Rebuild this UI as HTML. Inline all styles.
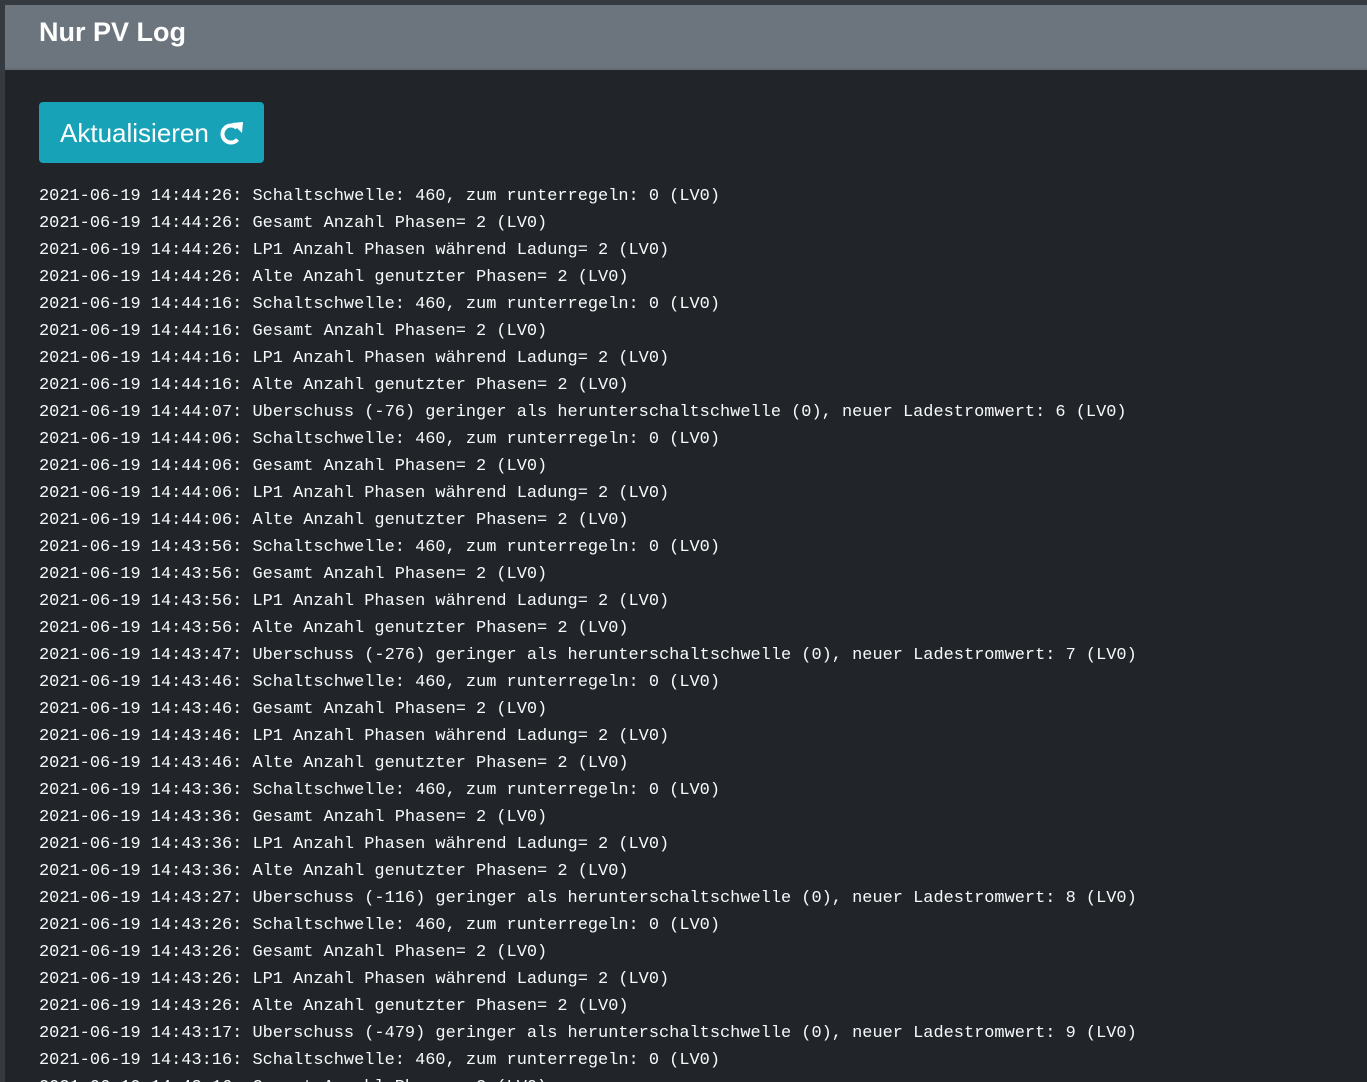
<!DOCTYPE html>
<html><head><meta charset="utf-8"><style>
html,body{margin:0;padding:0;width:1367px;height:1082px;overflow:hidden;}
body{background:#343a40;position:relative;font-family:"Liberation Sans",sans-serif;}
.main{position:absolute;left:5px;top:5px;width:1362px;height:1077px;overflow:hidden;background:#212529;}
.hdr{height:63px;background:#6c757d;border-bottom:2px solid #656c74;}
.hdr h1{margin:0;position:absolute;left:34px;top:12px;font-size:27px;font-weight:bold;color:#fff;}
.btn{position:absolute;left:34px;top:97px;width:225px;height:61px;background:#17a2b8;border-radius:4px;color:#fff;font-size:26px;line-height:63px;box-sizing:border-box;padding-left:21px;}
.btn svg{position:absolute;left:179px;top:19px;}
pre{position:absolute;left:34px;top:178px;margin:0;font-family:"Liberation Mono",monospace;font-size:16.95px;line-height:27px;color:#f8f9fa;}
</style></head><body>
<div class="main">
<div class="hdr"><h1>Nur PV Log</h1></div>
<div class="btn">Aktualisieren<svg width="26" height="26" viewBox="0 0 26 26"><path d="M19.5 18.5A8.5 8.5 0 1 1 19 7" fill="none" stroke="#fff" stroke-width="4"/><path d="M14 2L25 1L24 12Z" fill="#fff"/></svg></div>
<pre>2021-06-19 14:44:26: Schaltschwelle: 460, zum runterregeln: 0 (LV0)
2021-06-19 14:44:26: Gesamt Anzahl Phasen= 2 (LV0)
2021-06-19 14:44:26: LP1 Anzahl Phasen während Ladung= 2 (LV0)
2021-06-19 14:44:26: Alte Anzahl genutzter Phasen= 2 (LV0)
2021-06-19 14:44:16: Schaltschwelle: 460, zum runterregeln: 0 (LV0)
2021-06-19 14:44:16: Gesamt Anzahl Phasen= 2 (LV0)
2021-06-19 14:44:16: LP1 Anzahl Phasen während Ladung= 2 (LV0)
2021-06-19 14:44:16: Alte Anzahl genutzter Phasen= 2 (LV0)
2021-06-19 14:44:07: Uberschuss (-76) geringer als herunterschaltschwelle (0), neuer Ladestromwert: 6 (LV0)
2021-06-19 14:44:06: Schaltschwelle: 460, zum runterregeln: 0 (LV0)
2021-06-19 14:44:06: Gesamt Anzahl Phasen= 2 (LV0)
2021-06-19 14:44:06: LP1 Anzahl Phasen während Ladung= 2 (LV0)
2021-06-19 14:44:06: Alte Anzahl genutzter Phasen= 2 (LV0)
2021-06-19 14:43:56: Schaltschwelle: 460, zum runterregeln: 0 (LV0)
2021-06-19 14:43:56: Gesamt Anzahl Phasen= 2 (LV0)
2021-06-19 14:43:56: LP1 Anzahl Phasen während Ladung= 2 (LV0)
2021-06-19 14:43:56: Alte Anzahl genutzter Phasen= 2 (LV0)
2021-06-19 14:43:47: Uberschuss (-276) geringer als herunterschaltschwelle (0), neuer Ladestromwert: 7 (LV0)
2021-06-19 14:43:46: Schaltschwelle: 460, zum runterregeln: 0 (LV0)
2021-06-19 14:43:46: Gesamt Anzahl Phasen= 2 (LV0)
2021-06-19 14:43:46: LP1 Anzahl Phasen während Ladung= 2 (LV0)
2021-06-19 14:43:46: Alte Anzahl genutzter Phasen= 2 (LV0)
2021-06-19 14:43:36: Schaltschwelle: 460, zum runterregeln: 0 (LV0)
2021-06-19 14:43:36: Gesamt Anzahl Phasen= 2 (LV0)
2021-06-19 14:43:36: LP1 Anzahl Phasen während Ladung= 2 (LV0)
2021-06-19 14:43:36: Alte Anzahl genutzter Phasen= 2 (LV0)
2021-06-19 14:43:27: Uberschuss (-116) geringer als herunterschaltschwelle (0), neuer Ladestromwert: 8 (LV0)
2021-06-19 14:43:26: Schaltschwelle: 460, zum runterregeln: 0 (LV0)
2021-06-19 14:43:26: Gesamt Anzahl Phasen= 2 (LV0)
2021-06-19 14:43:26: LP1 Anzahl Phasen während Ladung= 2 (LV0)
2021-06-19 14:43:26: Alte Anzahl genutzter Phasen= 2 (LV0)
2021-06-19 14:43:17: Uberschuss (-479) geringer als herunterschaltschwelle (0), neuer Ladestromwert: 9 (LV0)
2021-06-19 14:43:16: Schaltschwelle: 460, zum runterregeln: 0 (LV0)
2021-06-19 14:43:16: Gesamt Anzahl Phasen= 2 (LV0)</pre>
</div>
</body></html>
